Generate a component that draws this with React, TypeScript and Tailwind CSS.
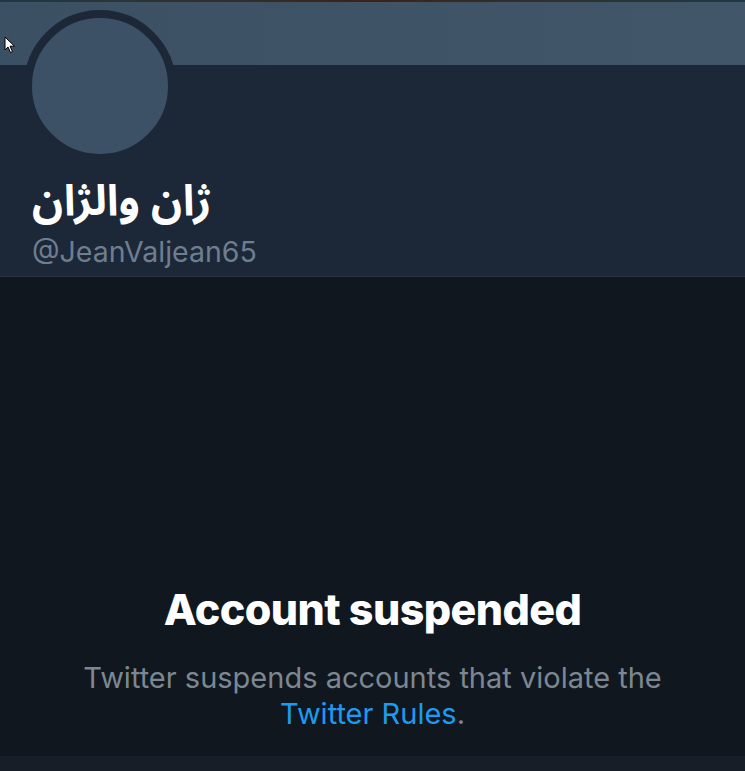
import React from 'react';

// Suspended profile page (dim theme)
const App: React.FC = () => {
  return (
    <div className="relative w-[745px] h-[771px] overflow-hidden flex flex-col bg-[#11171f] font-['Inter',sans-serif]">
      {/* thin top edge */}
      <div className="h-[2px] bg-gradient-to-r from-[#1d3a44] via-[#3a2418] to-[#1d3a44]" />

      {/* banner */}
      <div className="h-[63px] bg-gradient-to-r from-[#3c5064] to-[#42566a]" />

      {/* profile header */}
      <div className="h-[212px] bg-[#1c2838] border-b border-[#2a3340] px-6">
        <div className="-mt-[55px] w-[152px] h-[152px] rounded-full border-[8px] border-[#1c2838] bg-[#3d5166]" />
        <div className="pl-2 mt-[14px]">
          <div
            dir="rtl"
            className="w-fit h-[52px] flex items-center text-white font-bold text-[43px] leading-[52px] font-['Noto_Sans_Arabic','DejaVu_Sans',sans-serif]"
          >
            ژان والژان
          </div>
          <div className="text-[#6e7e90] text-[28.5px] leading-[36px] mt-[6px]">@JeanValjean65</div>
        </div>
      </div>

      {/* suspended notice */}
      <div className="flex-1 flex flex-col items-center justify-end pb-[24px] text-center">
        <h1 className="text-white font-extrabold text-[43px] leading-[52px] tracking-[-0.6px]">Account suspended</h1>
        <p className="mt-[25px] text-[#7c8792] text-[29px] leading-[36px] px-10">
          Twitter suspends accounts that violate the
          <br />
          <span className="text-[#1d9bf0]">Twitter Rules</span>.
        </p>
      </div>

      {/* bottom edge */}
      <div className="h-[15px] bg-[#171e28]" />

      {/* mouse pointer */}
      <svg className="absolute left-[4px] top-[36px]" width="12" height="18" viewBox="0 0 12 18">
        <path d="M1 1 L1 14 L4 11 L6.5 16.5 L8.5 15.5 L6 10.2 L10.5 10.2 Z" fill="#ffffff" stroke="#000000" strokeWidth="1" strokeLinejoin="round" />
      </svg>
    </div>
  );
};

export default App;
